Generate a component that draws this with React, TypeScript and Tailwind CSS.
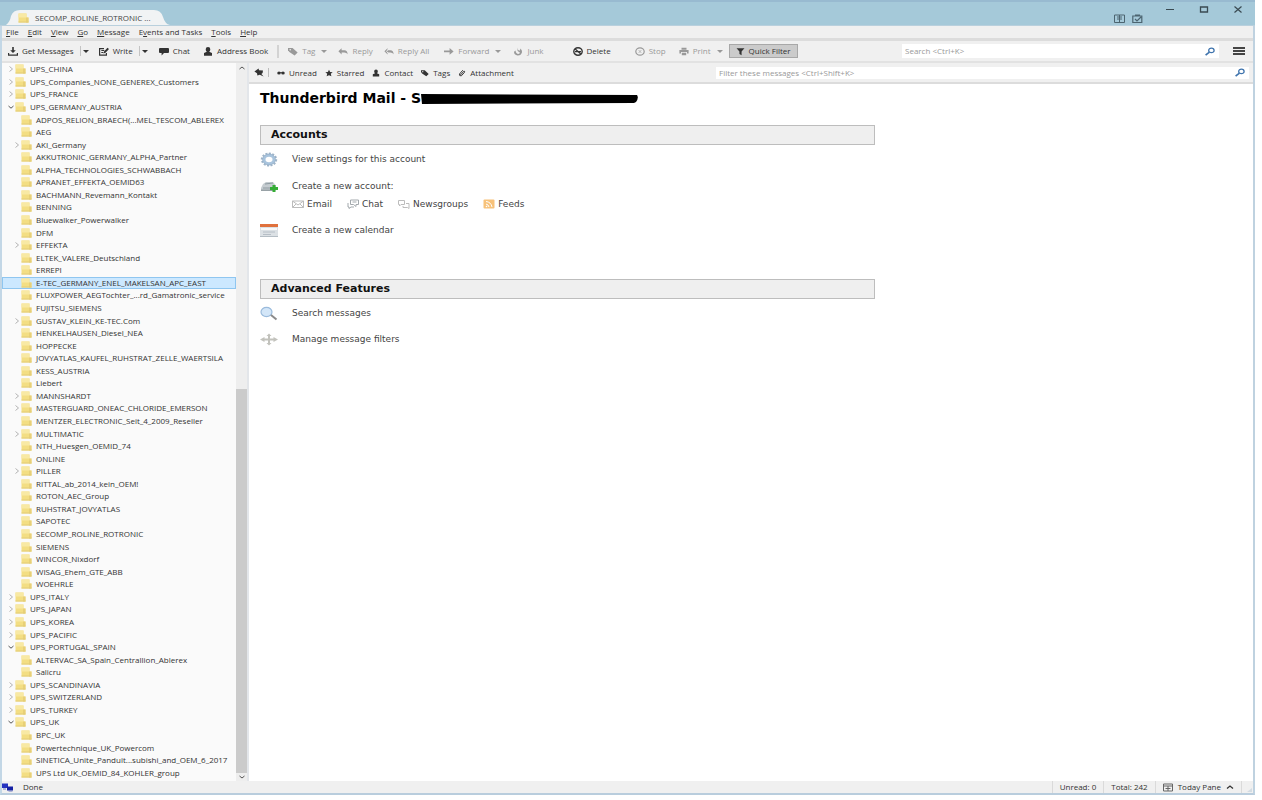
import { useState } from "react";
import type { ReactNode } from "react";
import clsx from "clsx";

type Folder = { name: string; level: 0 | 1; state?: "open" | "closed" };

const folders: Folder[] = [
  { name: "UPS_CHINA", level: 0, state: "closed" },
  { name: "UPS_Companies_NONE_GENEREX_Customers", level: 0, state: "closed" },
  { name: "UPS_FRANCE", level: 0, state: "closed" },
  { name: "UPS_GERMANY_AUSTRIA", level: 0, state: "open" },
  { name: "ADPOS_RELION_BRAECH(...MEL_TESCOM_ABLEREX", level: 1 },
  { name: "AEG", level: 1 },
  { name: "AKI_Germany", level: 1, state: "closed" },
  { name: "AKKUTRONIC_GERMANY_ALPHA_Partner", level: 1 },
  { name: "ALPHA_TECHNOLOGIES_SCHWABBACH", level: 1 },
  { name: "APRANET_EFFEKTA_OEMID63", level: 1 },
  { name: "BACHMANN_Revemann_Kontakt", level: 1 },
  { name: "BENNING", level: 1 },
  { name: "Bluewalker_Powerwalker", level: 1 },
  { name: "DFM", level: 1 },
  { name: "EFFEKTA", level: 1, state: "closed" },
  { name: "ELTEK_VALERE_Deutschland", level: 1 },
  { name: "ERREPI", level: 1 },
  { name: "E-TEC_GERMANY_ENEL_MAKELSAN_APC_EAST", level: 1 },
  { name: "FLUXPOWER_AEGTochter_...rd_Gamatronic_service", level: 1 },
  { name: "FUJITSU_SIEMENS", level: 1 },
  { name: "GUSTAV_KLEIN_KE-TEC.Com", level: 1, state: "closed" },
  { name: "HENKELHAUSEN_Diesel_NEA", level: 1 },
  { name: "HOPPECKE", level: 1 },
  { name: "JOVYATLAS_KAUFEL_RUHSTRAT_ZELLE_WAERTSILA", level: 1 },
  { name: "KESS_AUSTRIA", level: 1 },
  { name: "Liebert", level: 1 },
  { name: "MANNSHARDT", level: 1, state: "closed" },
  { name: "MASTERGUARD_ONEAC_CHLORIDE_EMERSON", level: 1, state: "closed" },
  { name: "MENTZER_ELECTRONIC_Seit_4_2009_Reseller", level: 1 },
  { name: "MULTIMATIC", level: 1, state: "closed" },
  { name: "NTH_Huesgen_OEMID_74", level: 1 },
  { name: "ONLINE", level: 1 },
  { name: "PILLER", level: 1, state: "closed" },
  { name: "RITTAL_ab_2014_kein_OEM!", level: 1 },
  { name: "ROTON_AEC_Group", level: 1 },
  { name: "RUHSTRAT_JOVYATLAS", level: 1 },
  { name: "SAPOTEC", level: 1 },
  { name: "SECOMP_ROLINE_ROTRONIC", level: 1 },
  { name: "SIEMENS", level: 1 },
  { name: "WINCOR_Nixdorf", level: 1 },
  { name: "WISAG_Ehem_GTE_ABB", level: 1 },
  { name: "WOEHRLE", level: 1 },
  { name: "UPS_ITALY", level: 0, state: "closed" },
  { name: "UPS_JAPAN", level: 0, state: "closed" },
  { name: "UPS_KOREA", level: 0, state: "closed" },
  { name: "UPS_PACIFIC", level: 0, state: "closed" },
  { name: "UPS_PORTUGAL_SPAIN", level: 0, state: "open" },
  { name: "ALTERVAC_SA_Spain_Centrallion_Ablerex", level: 1 },
  { name: "Salicru", level: 1 },
  { name: "UPS_SCANDINAVIA", level: 0, state: "closed" },
  { name: "UPS_SWITZERLAND", level: 0, state: "closed" },
  { name: "UPS_TURKEY", level: 0, state: "closed" },
  { name: "UPS_UK", level: 0, state: "open" },
  { name: "BPC_UK", level: 1 },
  { name: "Powertechnique_UK_Powercom", level: 1 },
  { name: "SINETICA_Unite_Panduit...subishi_and_OEM_6_2017", level: 1 },
  { name: "UPS Ltd UK_OEMID_84_KOHLER_group", level: 1 },
];

// Menu captions split around their access key
const menus = [
  ["", "F", "ile"],
  ["", "E", "dit"],
  ["", "V", "iew"],
  ["", "G", "o"],
  ["", "M", "essage"],
  ["E", "v", "ents and Tasks"],
  ["", "T", "ools"],
  ["", "H", "elp"],
];

const Glyph = ({ children, className = "w-[10px] h-[9px]" }: { children: ReactNode; className?: string }) => (
  <svg viewBox="0 0 10 9" className={clsx("shrink-0", className)} fill="currentColor" aria-hidden="true">
    {children}
  </svg>
);

const FolderIcon = () => (
  <svg viewBox="0 0 11 10" className="h-[10px] w-[11px] shrink-0" aria-hidden="true">
    <path d="M0.5 0.5h8v4h2v5h-10z" fill="#f3de83" />
    <path d="M0.5 0.5h8v4h-8z" fill="#f8e9a4" />
    <path d="M8 4.5h2.500v5H8z" fill="#e8d078" />
    <path d="M0.5 8.5h10v1h-10z" fill="#e3cd76" />
  </svg>
);

const Twisty = ({ state }: { state?: "open" | "closed" }) => (
  <svg viewBox="0 0 6 8" className="h-[8px] w-[6px] shrink-0" fill="none" aria-hidden="true">
    {state === "closed" && <path d="M1.5 1.5L4.5 4L1.5 6.5" stroke="#b3b3b3" />}
    {state === "open" && <path d="M0.5 3L3 5.2L5.5 3" stroke="#555" />}
  </svg>
);

const DownloadIcon = () => (
  <Glyph>
    <path d="M4.2 0h1.6v3.2h2L5 6L2.2 3.2h2z" />
    <path d="M0 6h1.2v1.6h7.6V6H10v2.8H0z" />
  </Glyph>
);
const WriteIcon = () => (
  <Glyph>
    <path d="M0 1h5v1.2H1.2v5.4h5.6V6H8v2.8H0z" />
    <path d="M2.3 3h3v1h-3zM2.3 5h2v1h-2zM4.5 6.5L5 4.5L8.5 0.7L10 2L6.5 5.8z" />
  </Glyph>
);
const ChatIcon = () => (
  <Glyph>
    <path d="M1 1h8q1 0 1 1v3q0 1-1 1H5L2.6 8.5V6H1Q0 6 0 5V2q0-1 1-1z" />
  </Glyph>
);
const PersonIcon = ({ className }: { className?: string }) => (
  <Glyph className={className}>
    <path d="M5 0q2.300 0 2.300 2.200Q7.300 4 6.200 4.800L9 6v2.800H1V6l2.800-1.200Q2.700 4 2.700 2.200Q2.700 0 5 0z" />
  </Glyph>
);
const TagIcon = ({ className }: { className?: string }) => (
  <Glyph className={className}>
    <path d="M0 1h4.6L9.6 5.6L6.6 8.6L1.4 5L0 3.2z" />
    <circle cx="2.2" cy="2.8" r="0.8" fill="#f0f0f0" />
  </Glyph>
);
const ReplyIcon = ({ all }: { all?: boolean }) => (
  <Glyph>
    <path d="M3.6 1.2v2h2.8q3 .2 3.2 4Q8.6 5.4 6.4 5.4H3.6v2L0.4 4.3z" />
    {all && <path d="M5.6 0.6l-3 3.7 3 3.6" fill="none" stroke="#f0f0f0" />}
  </Glyph>
);
const ForwardIcon = () => (
  <Glyph>
    <path d="M0 3.6h5.6V1L9.6 4.4L5.6 7.8V5.2H0z" />
  </Glyph>
);
const JunkIcon = () => (
  <Glyph>
    <path d="M5 0.4Q4 2.6 6.2 3.8Q7.6 3.2 7.2 1.4Q9.6 3 8.8 6Q7.6 8.8 4.6 8.6Q1 8 1 4.8L2.6 3.6Q2.6 6.6 5 7Q7.6 6.6 6.4 5Q3.4 4.4 5 0.4z" />
  </Glyph>
);
const DeleteIcon = () => (
  <Glyph>
    <ellipse cx="5" cy="4.5" rx="4.2" ry="3.7" fill="none" stroke="currentColor" strokeWidth="1.4" />
    <path d="M2.2 2L7.8 7M2 4.6h6" fill="none" stroke="currentColor" strokeWidth="1.2" />
  </Glyph>
);
const StopIcon = () => (
  <Glyph>
    <ellipse cx="5" cy="4.5" rx="4.2" ry="3.7" fill="none" stroke="currentColor" strokeWidth="1.2" />
    <path d="M3.6 3l2.8 3M6.4 3L3.6 6" stroke="currentColor" strokeWidth="0.6" />
  </Glyph>
);
const PrintIcon = () => (
  <Glyph>
    <path d="M2.5 0.8h5v2h-5zM0.4 3h9.2v3.4H8V5H2v1.4H0.4zM2.8 5.8h4.4v2.4H2.8z" />
  </Glyph>
);
const FunnelIcon = () => (
  <Glyph className="h-[9px] w-[9px]">
    <path d="M0.6 1h8.8L6.2 4.4v4.2L3.8 7.2V4.4z" />
  </Glyph>
);
const PinIcon = () => (
  <Glyph>
    <path d="M0.4 3.4L4.6 0.6l.4 1.6L9 2.4 8.6 5 7.4 6l2.2 2.6L5.8 6.8 3.4 7.6 3 5.2z" />
  </Glyph>
);
const UnreadIcon = () => (
  <Glyph className="h-[8px] w-[8px]">
    <ellipse cx="2.5" cy="4.5" rx="2.200" ry="2" />
    <ellipse cx="7.500" cy="4.5" rx="2.200" ry="2" />
    <path d="M2 3.6h6v1H2z" />
  </Glyph>
);
const StarIcon = () => (
  <Glyph className="h-[8px] w-[8px]">
    <path d="M5 0.5l1.4 2.6 3.2.4-2.4 2 .8 3L5 7.2 2 8.5l.8-3-2.4-2 3.2-.4z" />
  </Glyph>
);
const ClipIcon = () => (
  <Glyph className="h-[8px] w-[8px]">
    <path d="M3 7L7.4 2.2Q8.8 2 8.2 3.6L4.2 8Q1.4 8.6 1.8 5.8L6 1" fill="none" stroke="currentColor" strokeWidth="1.2" />
  </Glyph>
);
const Magnifier = () => (
  <svg viewBox="0 0 10 9" className="h-[9px] w-[10px] shrink-0" fill="none" stroke="#3f74ad" aria-hidden="true">
    <ellipse cx="6.4" cy="3.4" rx="2.7" ry="2.3" strokeWidth="1.3" />
    <path d="M4.4 5.2L0.6 8.2" strokeWidth="1.7" />
  </svg>
);

const Caret = () => (
  <svg viewBox="0 0 6 3" className="h-[3px] w-[6px] shrink-0" fill="currentColor" aria-hidden="true">
    <path d="M0 0h6L3 3z" />
  </svg>
);

const ToolButton = ({ icon, label, disabled, className }: { icon: ReactNode; label: string; disabled?: boolean; className?: string }) => (
  <button type="button" disabled={disabled} className={clsx("flex items-center gap-1 whitespace-nowrap", disabled && "text-[#999]", className)}>
    {icon}
    {label}
  </button>
);

const MenuArrow = ({ label, disabled, split }: { label: string; disabled?: boolean; split?: boolean }) => (
  <button
    type="button"
    aria-label={label}
    disabled={disabled}
    className={clsx("ml-[6px] flex h-[10px] items-center", split && "border-l border-[#c4c4c4] pl-[2px]", disabled && "text-[#999]")}
  >
    <Caret />
  </button>
);

const SearchField = ({ label, placeholder, className }: { label: string; placeholder: string; className?: string }) => (
  <label className={clsx("flex items-center bg-white pr-1 pl-[3px]", className)}>
    <input
      type="text"
      aria-label={label}
      placeholder={placeholder}
      className="min-w-0 flex-1 bg-transparent outline-none placeholder:text-[#999]"
    />
    <Magnifier />
  </label>
);

const TitleBar = () => (
  <header className="flex h-[26px] shrink-0 items-end border-t-2 border-b border-t-[#98bad0] border-b-[#b9d0dd] bg-[#a5c9d9] text-[#444]">
    <div className="relative ml-[6px] flex h-[15px] w-[164px] items-center pl-[12px]">
      <svg viewBox="0 0 164 15" preserveAspectRatio="none" className="absolute inset-0 h-full w-full" aria-hidden="true">
        <path d="M0 15Q4 12 5 6Q7 0 14 0H148Q155 0 157 7Q159 14 164 15z" fill="#f1f3f4" />
      </svg>
      <span className="relative flex items-center gap-[6px]">
        <FolderIcon />
        SECOMP_ROLINE_ROTRONIC ...
      </span>
    </div>
    <div className="ml-auto flex items-center gap-[7px] pr-[22px] pb-[2px]">
      <svg viewBox="0 0 11 9" className="h-[9px] w-[11px]" fill="none" stroke="#4c6470" aria-label="Calendar">
        <path d="M0.5 1h10v7.5h-10zM5.5 1v7.5M3 5h5M3 3h5" />
      </svg>
      <svg viewBox="0 0 11 9" className="h-[9px] w-[11px]" fill="none" stroke="#4c6470" aria-label="Tasks">
        <path d="M0.8 2h9v6.5h-9zM3 1h5M3 5l2 2 4-4" strokeWidth="1.2" />
      </svg>
    </div>
    <div className="flex gap-[24px] self-start pt-[3px] pr-[12px] text-[#3a4a52]">
      <button type="button" aria-label="Minimize">
        <svg viewBox="0 0 10 9" className="h-[9px] w-[10px]"><path d="M1 4.5h8" stroke="currentColor" /></svg>
      </button>
      <button type="button" aria-label="Maximize">
        <svg viewBox="0 0 10 9" className="h-[9px] w-[10px]"><path d="M1.500 2h7v5h-7z" fill="none" stroke="currentColor" strokeWidth="1.300" /></svg>
      </button>
      <button type="button" aria-label="Close">
        <svg viewBox="0 0 10 9" className="h-[9px] w-[10px]"><path d="M1.500 1.500l7 6M8.500 1.500l-7 6" stroke="currentColor" strokeWidth="1.200" /></svg>
      </button>
    </div>
  </header>
);

const Toolbar = () => (
  <div className="flex h-[22px] shrink-0 items-center border-b-2 border-[#e2e2e2] pr-[8px] pl-[6px]">
    <ToolButton icon={<DownloadIcon />} label="Get Messages" />
    <MenuArrow label="Get messages options" split />
    <ToolButton icon={<WriteIcon />} label="Write" className="ml-[10px]" />
    <MenuArrow label="Write options" split />
    <ToolButton icon={<ChatIcon />} label="Chat" className="ml-[11px]" />
    <ToolButton icon={<PersonIcon />} label="Address Book" className="ml-[13px]" />
    <div className="mx-[9px] h-[13px] w-[2px] bg-[#d3d3d3]" />
    <ToolButton icon={<TagIcon />} label="Tag" disabled />
    <MenuArrow label="Tag options" disabled />
    <ToolButton icon={<ReplyIcon />} label="Reply" disabled className="ml-[11px]" />
    <ToolButton icon={<ReplyIcon all />} label="Reply All" disabled className="ml-[11px]" />
    <ToolButton icon={<ForwardIcon />} label="Forward" disabled className="ml-[15px]" />
    <MenuArrow label="Forward options" disabled />
    <ToolButton icon={<JunkIcon />} label="Junk" disabled className="ml-[12px]" />
    <ToolButton icon={<DeleteIcon />} label="Delete" className="ml-[29px]" />
    <ToolButton icon={<StopIcon />} label="Stop" disabled className="ml-[24px]" />
    <ToolButton icon={<PrintIcon />} label="Print" disabled className="ml-[13px]" />
    <MenuArrow label="Print options" disabled />
    <ToolButton icon={<FunnelIcon />} label="Quick Filter" className="ml-[6px] h-[14px] border border-[#a8a8a8] bg-[#cbcbcb] px-[6px]" />
    <SearchField label="Search" placeholder="Search <Ctrl+K>" className="ml-auto h-[14px] w-[317px]" />
    <button type="button" aria-label="Application menu" className="ml-[14px] flex w-[12px] flex-col gap-px">
      <span className="h-[2px] bg-[#444]" />
      <span className="h-[2px] bg-[#444]" />
      <span className="h-[2px] bg-[#444]" />
    </button>
  </div>
);

const FolderTree = () => {
  const [selected, setSelected] = useState("E-TEC_GERMANY_ENEL_MAKELSAN_APC_EAST");

  return (
    <aside className="flex w-[247px] shrink-0 border-r-2 border-[#e3e6ea] bg-[#fafafa]">
      <ul role="tree" aria-label="Folders" className="grid min-w-0 flex-1 auto-rows-fr pb-[2px]">
        {folders.map((folder) => (
          <li key={folder.name} role="treeitem" aria-selected={folder.name === selected} className="min-h-0">
            <button
              type="button"
              onClick={() => setSelected(folder.name)}
              className={clsx(
                "flex h-full w-full items-center border leading-none whitespace-nowrap",
                folder.level ? "pl-[11px]" : "pl-[5px]",
                folder.name === selected ? "border-[#8fc6f0] bg-[#cce8ff]" : "border-transparent"
              )}
            >
              <Twisty state={folder.state} />
              <span className="ml-px"><FolderIcon /></span>
              <span className="ml-[4px]">{folder.name}</span>
            </button>
          </li>
        ))}
      </ul>
      <div className="flex w-[11px] shrink-0 flex-col items-center bg-[#eee]">
        <svg viewBox="0 0 8 8" className="h-[10px] w-[8px]" fill="none" stroke="#555"><path d="M1.500 5L4 3l2.500 2" /></svg>
        <div className="flex-[316]" />
        <div className="w-full flex-[384] bg-[#cbcbcb]" />
        <svg viewBox="0 0 8 8" className="h-[8px] w-[8px]" fill="none" stroke="#555"><path d="M1.500 3L4 5l2.500-2" /></svg>
      </div>
    </aside>
  );
};

const QuickFilterBar = () => (
  <div className="flex h-[21px] shrink-0 items-center border-b-2 border-[#dcdcdc] bg-[#f0f0f0] pr-[4px] pl-[5px]">
    <button type="button" aria-label="Keep filters applied"><PinIcon /></button>
    <div className="mr-[8px] ml-[4px] h-[9px] w-px bg-[#bbb]" />
    <div className="flex gap-[8px] text-[#333]">
      <ToolButton icon={<UnreadIcon />} label="Unread" />
      <ToolButton icon={<StarIcon />} label="Starred" />
      <ToolButton icon={<PersonIcon className="h-[8px] w-[8px]" />} label="Contact" />
      <ToolButton icon={<TagIcon className="h-[8px] w-[8px]" />} label="Tags" />
      <ToolButton icon={<ClipIcon />} label="Attachment" />
    </div>
    <SearchField label="Filter messages" placeholder="Filter these messages <Ctrl+Shift+K>" className="ml-auto h-[12px] w-[533px]" />
  </div>
);

const SectionTitle = ({ children }: { children: ReactNode }) => (
  <h2 className="flex h-[20px] items-center border border-[#bdbdbd] bg-[#efefef] pl-[10px] text-[11px] font-bold text-[#111]">
    {children}
  </h2>
);

const Action = ({ icon, label }: { icon: ReactNode; label: string }) => (
  <a href="#" className="flex h-[16px] items-center gap-[14px]">
    <svg viewBox="0 0 18 15" className="h-[15px] w-[18px] shrink-0" aria-hidden="true">{icon}</svg>
    {label}
  </a>
);

const AccountType = ({ icon, label }: { icon: ReactNode; label: string }) => (
  <a href="#" className="flex items-center gap-[3px]">
    <svg viewBox="0 0 12 10" className="h-[10px] w-[12px] shrink-0" fill="none" aria-hidden="true">{icon}</svg>
    {label}
  </a>
);

const AccountCentral = () => (
  <div className="flex-1 pt-[4px] pl-[11px] font-['DejaVu_Sans',sans-serif] text-[9px] text-[#444]">
    <h1 className="flex h-[20px] items-center text-[14px] font-bold text-black">
      Thunderbird Mail - S
      <svg viewBox="0 0 217 11" className="h-[11px] w-[217px]" aria-label="Redacted">
        <path d="M0 1L216 2Q218 5 215 9L213 10L1 11z" />
      </svg>
    </h1>
    <section className="mt-[17px] max-w-[615px]">
      <SectionTitle>Accounts</SectionTitle>
      <div className="mt-[6px] flex flex-col gap-[11px]">
        <Action
          label="View settings for this account"
          icon={
            <g fill="none">
              <ellipse cx="9" cy="7.500" rx="7.200" ry="6" stroke="#9fb4c8" strokeWidth="2" strokeDasharray="2 1.400" />
              <ellipse cx="9" cy="7.500" rx="5" ry="4.200" stroke="#a9c4dd" strokeWidth="3" />
              <ellipse cx="9" cy="7.500" rx="6.500" ry="5.400" stroke="#8ea9c2" strokeWidth="0.600" />
            </g>
          }
        />
        <div>
          <Action
            label="Create a new account:"
            icon={
              <g>
                <path d="M3 5L6 3h7l3 3.500v5H1V9z" fill="#c5ccd0" />
                <path d="M5 5l8-1M3 9h9" stroke="#8e9aa0" />
                <path d="M1 10.500h12v1.500H1z" fill="#98a2a6" />
                <path d="M12.500 6h3v2H18v3h-2.500v2h-3v-2H10V8h2.500z" fill="#35ad35" />
              </g>
            }
          />
          <div className="mt-[3px] flex h-[14px] items-center gap-[15px] pl-[32px]">
            <AccountType label="Email" icon={<path d="M0.500 2h11v6.500h-11zM0.500 2L6 6l5.500-4M0.500 8.500L4 5M11.500 8.500L8 5" stroke="#bcbcbc" />} />
            <AccountType label="Chat" icon={<path d="M3.500 1h8v4.500H9v2L6.500 5.500h-3zM1 4v4h1v1.500L4 8h3M5.500 3h4" stroke="#a3a9ad" />} />
            <AccountType label="Newsgroups" icon={<path d="M0.500 1.500h6v4H3L1.500 7V5.500h-1zM5 7v1.500h4.500L11 9.500v-5H8" stroke="#bcbcbc" />} />
            <AccountType
              label="Feeds"
              icon={
                <g>
                  <rect x="0.500" y="0.500" width="11" height="9" rx="1" fill="#f7c27a" />
                  <path d="M3 2.500q5 .5 6 5.500M3 5q2.500.5 3 3" stroke="#fff" />
                  <circle cx="3.500" cy="7.500" r="0.800" fill="#fff" />
                </g>
              }
            />
          </div>
        </div>
        <Action
          label="Create a new calendar"
          icon={
            <g>
              <path d="M0 1h18v13H0z" fill="#dce1e5" />
              <path d="M0 1h18v3H0z" fill="#e0713d" />
              <path d="M1 5h16v2H1z" fill="#f8f8f8" />
              <path d="M3 9h12M3 11.500h8" stroke="#b6bec6" />
              <path d="M0 13h18v1H0z" fill="#b4bdc4" />
            </g>
          }
        />
      </div>
    </section>
    <section className="mt-[41px] max-w-[615px]">
      <SectionTitle>Advanced Features</SectionTitle>
      <div className="mt-[6px] flex flex-col gap-[10px]">
        <Action
          label="Search messages"
          icon={
            <g>
              <ellipse cx="6.500" cy="6" rx="5.500" ry="4.600" fill="#d3e6f8" stroke="#9bbbdc" strokeWidth="1.200" />
              <path d="M11 9l5.500 4.500" stroke="#8b8b8b" strokeWidth="2" />
            </g>
          }
        />
        <Action
          label="Manage message filters"
          icon={
            <g fill="#c2c2bc">
              <path d="M3 6.500h12v2H3zM8 3h2v9H8z" />
              <path d="M0 7.500L4.500 5v5zM18 7.500L13.500 5v5zM9 1.500L11.500 4h-5zM9 13.500l2.500-2.500h-5z" />
            </g>
          }
        />
      </div>
    </section>
  </div>
);

const StatusBar = () => (
  <footer className="flex h-[12px] shrink-0 items-center bg-[#f0f0f0] leading-none">
    <svg viewBox="0 0 12 9" className="h-[9px] w-[12px]" aria-label="Online">
      <path d="M0 0.500h6v4.500H0z" fill="#2432c0" />
      <path d="M5 3.500h6v4H5z" fill="#1420a4" />
      <path d="M1 5.500h3v1H1zM6.500 7.500h4v1h-4z" fill="#6f7bbd" />
    </svg>
    <span className="ml-[9px]">Done</span>
    <div className="ml-auto flex h-full items-stretch divide-x divide-[#dadada] border-x border-[#dadada]">
      <span className="flex items-center px-[7px]">Unread: 0</span>
      <span className="flex items-center px-[7px]">Total: 242</span>
      <button type="button" className="flex items-center gap-[5px] px-[7px]">
        <svg viewBox="0 0 10 9" className="h-[9px] w-[10px]" fill="none" stroke="#666" aria-hidden="true">
          <path d="M0.500 1h9v7h-9zM0.500 3h9M2.500 5.500h5M5 3v5" />
        </svg>
        Today Pane
        <svg viewBox="0 0 8 6" className="h-[6px] w-[8px]" fill="none" stroke="#333" strokeWidth="1.300" aria-hidden="true">
          <path d="M1 4.500L4 2l3 2.500" />
        </svg>
      </button>
    </div>
    <svg viewBox="0 0 11 12" className="h-[12px] w-[11px]" aria-hidden="true">
      <path d="M10 7v4H5z" fill="#d3dce3" />
    </svg>
  </footer>
);

export default function App() {
  return (
    <div className="h-screen bg-white pr-[7px] pb-[5px] font-['Open_Sans',sans-serif] text-[8px] leading-[12px] text-[#333]">
      <div className="flex h-full flex-col bg-[#f0f0f0]">
        <TitleBar />
        <div className="flex min-h-0 flex-1 flex-col border-x-2 border-b-2 border-r-[#bfd2e0] border-b-[#b9cddd] border-l-[#c3d7e6]">
          <nav className="flex h-[15px] shrink-0 items-start gap-[9px] border-b-3 border-[#dcdcdc] pl-[4px]">
            {menus.map(([before, key, after]) => (
              <button key={key + after} type="button" className="whitespace-nowrap">
                {before}
                <u>{key}</u>
                {after}
              </button>
            ))}
          </nav>
          <Toolbar />
          <div className="flex min-h-0 flex-1">
            <FolderTree />
            <main className="flex min-w-0 flex-1 flex-col bg-white">
              <QuickFilterBar />
              <AccountCentral />
            </main>
          </div>
          <StatusBar />
        </div>
      </div>
    </div>
  );
}
